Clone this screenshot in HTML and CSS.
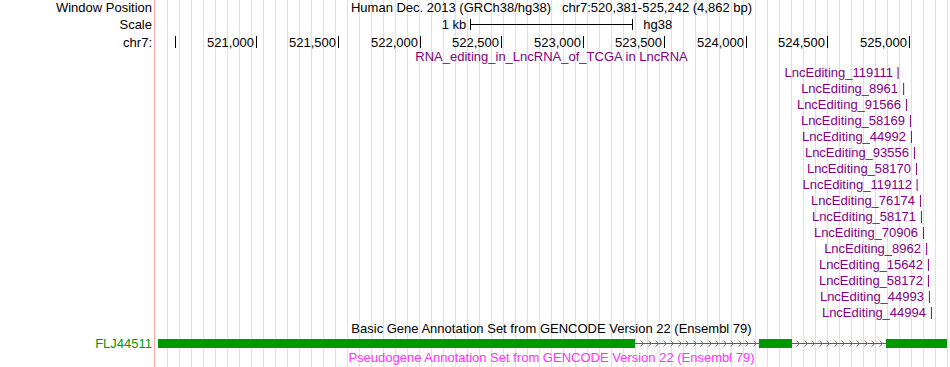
FILE: index.html
```html
<!DOCTYPE html>
<html>

<head>
  <title>chr7:520,381-525,242</title>
  <link rel="stylesheet" href="styles.css">
</head>

<body>
  <div class="browser">

    <div class="row row-pos">
      <div class="label">Window Position</div>
      <div class="track center">Human Dec. 2013 (GRCh38/hg38)&nbsp;&nbsp;&nbsp;chr7:520,381-525,242 (4,862 bp)</div>
    </div>

    <div class="row row-scale">
      <div class="label">Scale</div>
      <div class="track scale">
        <span>1 kb</span>
        <span class="scale-bar"></span>
        <span>hg38</span>
      </div>
    </div>

    <div class="row row-ruler">
      <div class="label">chr7:</div>
      <div class="track">
        <!-- left = tick x + 1 - 156 -->
        <span class="tick" style="left: 20px"></span>
        <span class="tick" style="left: 101px">521,000</span>
        <span class="tick" style="left: 183px">521,500</span>
        <span class="tick" style="left: 265px">522,000</span>
        <span class="tick" style="left: 346px">522,500</span>
        <span class="tick" style="left: 428px">523,000</span>
        <span class="tick" style="left: 509px">523,500</span>
        <span class="tick" style="left: 591px">524,000</span>
        <span class="tick" style="left: 672px">524,500</span>
        <span class="tick" style="left: 754px">525,000</span>
      </div>
    </div>

    <div class="row row-title">
      <div class="label"></div>
      <div class="track center purple">RNA_editing_in_LncRNA_of_TCGA in LncRNA</div>
    </div>

    <div class="row row-item"><div class="label"></div><div class="track"><span class="feat" style="left: 743px">LncEditing_119111</span></div></div>
    <div class="row row-item"><div class="label"></div><div class="track"><span class="feat" style="left: 748px">LncEditing_8961</span></div></div>
    <div class="row row-item"><div class="label"></div><div class="track"><span class="feat" style="left: 751px">LncEditing_91566</span></div></div>
    <div class="row row-item"><div class="label"></div><div class="track"><span class="feat" style="left: 755px">LncEditing_58169</span></div></div>
    <div class="row row-item"><div class="label"></div><div class="track"><span class="feat" style="left: 756px">LncEditing_44992</span></div></div>
    <div class="row row-item"><div class="label"></div><div class="track"><span class="feat" style="left: 759px">LncEditing_93556</span></div></div>
    <div class="row row-item"><div class="label"></div><div class="track"><span class="feat" style="left: 761px">LncEditing_58170</span></div></div>
    <div class="row row-item"><div class="label"></div><div class="track"><span class="feat" style="left: 762px">LncEditing_119112</span></div></div>
    <div class="row row-item"><div class="label"></div><div class="track"><span class="feat" style="left: 765px">LncEditing_76174</span></div></div>
    <div class="row row-item"><div class="label"></div><div class="track"><span class="feat" style="left: 766px">LncEditing_58171</span></div></div>
    <div class="row row-item"><div class="label"></div><div class="track"><span class="feat" style="left: 768px">LncEditing_70906</span></div></div>
    <div class="row row-item"><div class="label"></div><div class="track"><span class="feat" style="left: 771px">LncEditing_8962</span></div></div>
    <div class="row row-item"><div class="label"></div><div class="track"><span class="feat" style="left: 773px">LncEditing_15642</span></div></div>
    <div class="row row-item"><div class="label"></div><div class="track"><span class="feat" style="left: 773px">LncEditing_58172</span></div></div>
    <div class="row row-item"><div class="label"></div><div class="track"><span class="feat" style="left: 774px">LncEditing_44993</span></div></div>
    <div class="row row-item"><div class="label"></div><div class="track"><span class="feat" style="left: 776px">LncEditing_44994</span></div></div>

    <div class="row row-title2">
      <div class="label"></div>
      <div class="track center">Basic Gene Annotation Set from GENCODE Version 22 (Ensembl 79)</div>
    </div>

    <div class="row row-gene">
      <div class="label green">FLJ44511</div>
      <div class="track">
        <svg class="gene" width="794" height="13" viewBox="0 0 794 13">
          <rect x="479" y="6" width="124" height="1" fill="#009900" />
          <rect x="636" y="6" width="94" height="1" fill="#009900" />
          <path fill="none" stroke="#777" stroke-width="1"
            d="M484.5 3.5l3 3l-3 3M492.5 3.5l3 3l-3 3M499.5 3.5l3 3l-3 3M507.5 3.5l3 3l-3 3M514.5 3.5l3 3l-3 3M522.5 3.5l3 3l-3 3M529.5 3.5l3 3l-3 3M537.5 3.5l3 3l-3 3M544.5 3.5l3 3l-3 3M552.5 3.5l3 3l-3 3M559.5 3.5l3 3l-3 3M567.5 3.5l3 3l-3 3M574.5 3.5l3 3l-3 3M582.5 3.5l3 3l-3 3M589.5 3.5l3 3l-3 3M597.5 3.5l3 3l-3 3
               M640.5 3.5l3 3l-3 3M648.5 3.5l3 3l-3 3M655.5 3.5l3 3l-3 3M663.5 3.5l3 3l-3 3M670.5 3.5l3 3l-3 3M678.5 3.5l3 3l-3 3M685.5 3.5l3 3l-3 3M693.5 3.5l3 3l-3 3M700.5 3.5l3 3l-3 3M708.5 3.5l3 3l-3 3M715.5 3.5l3 3l-3 3M723.5 3.5l3 3l-3 3" />
          <rect x="2" y="2" width="477" height="9" fill="#009900" />
          <rect x="603" y="2" width="33" height="9" fill="#009900" />
          <rect x="730" y="2" width="61" height="9" fill="#009900" />
        </svg>
      </div>
    </div>

    <div class="row row-last">
      <div class="label"></div>
      <div class="track center pink">Pseudogene Annotation Set from GENCODE Version 22 (Ensembl 79)</div>
    </div>

  </div>
</body>

</html>
```

FILE: styles.css
```css
body {
  margin: 0;
  font-family: "Liberation Sans", Arial, sans-serif;
  font-size: 13px;
  color: #000;
  background-color: #fff;
  overflow: hidden;
}

.browser {
  display: flex;
  flex-direction: column;
  height: 100vh;
}

.row {
  display: flex;
  flex: none;
  line-height: 16px;
  white-space: nowrap;
}

.label {
  flex: none;
  width: 155px;
  box-sizing: border-box;
  padding-right: 2px;
  text-align: right;
  border-right: 1px solid #ffaaaa;
}

.track {
  flex: 1;
  position: relative;
  margin-left: 1px;
  background-image: linear-gradient(to right, transparent 11px, #dcdcff 11px);
  background-size: 12px 100%;
}

.center {
  text-align: center;
  padding-right: 3px;
}

.purple {
  color: #800080;
}

.green {
  color: #009900;
}

.pink {
  color: #ff33ff;
}

/* row heights */
.row-pos {
  height: 17px;
}

.row-scale {
  height: 18px;
}

.row-ruler {
  height: 14px;
}

.row-title,
.row-title2,
.row-item {
  height: 16px;
}

.row-gene {
  height: 13px;
  line-height: 13px;
}

.row-last {
  flex: 1 0 auto;
}

/* scale bar */
.scale {
  display: flex;
  justify-content: center;
  align-items: flex-start;
  padding-left: 8px;
}

.scale-bar {
  width: 163px;
  height: 11px;
  margin: 2px 10px 0 4px;
  box-sizing: border-box;
  border-left: 1px solid #000;
  border-right: 1px solid #000;
  background: linear-gradient(#000, #000) center / 100% 1px no-repeat;
}

/* base position ruler */
.tick {
  position: absolute;
  top: 0;
  transform: translateX(-100%);
  padding-right: 3px;
}

.tick::after {
  content: "";
  position: absolute;
  right: 0;
  top: 1px;
  width: 1px;
  height: 12px;
  background-color: #000;
}

/* lnc editing items */
.feat {
  position: absolute;
  top: 0;
  transform: translateX(-100%);
  padding-right: 6px;
  color: #800080;
}

.feat::after {
  content: "";
  position: absolute;
  right: 0;
  top: 2px;
  width: 1px;
  height: 12px;
  background-color: currentColor;
}

.gene {
  display: block;
}
```
